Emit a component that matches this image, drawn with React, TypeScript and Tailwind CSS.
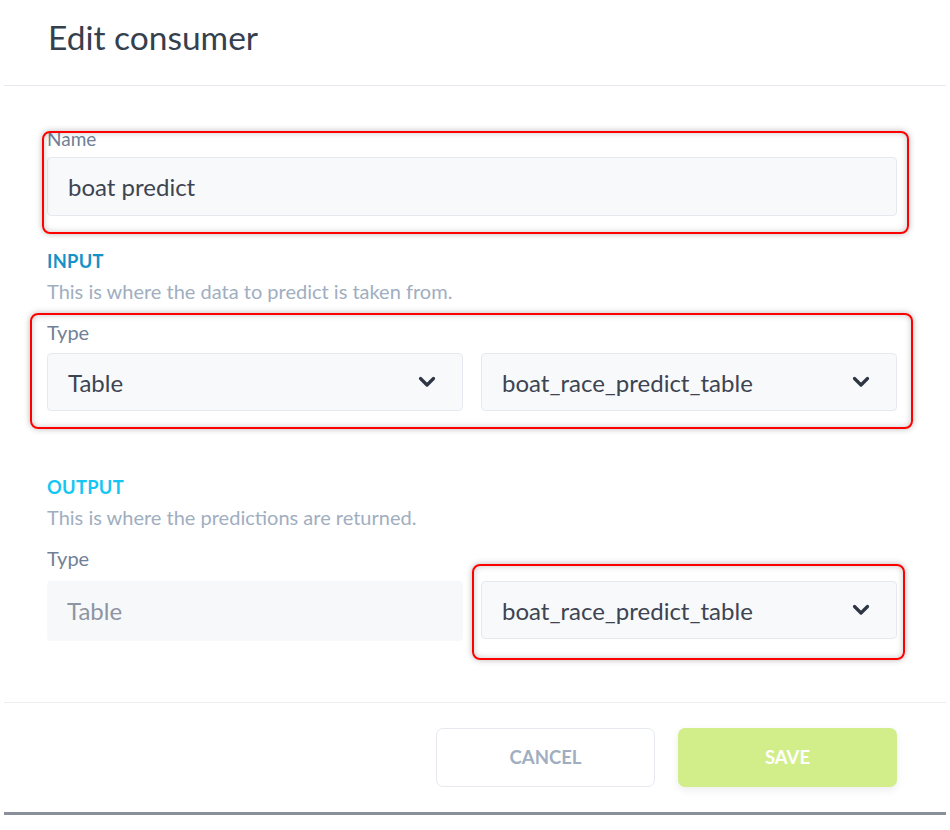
import React from 'react';

const font = "font-['Lato','Noto_Sans',sans-serif]";

const Chevron: React.FC = () => (
    <svg width="18" height="12" viewBox="0 0 18 12" className="shrink-0">
        <polyline points="2.5,2.5 9,9 15.5,2.5" fill="none" stroke="#2d3642" strokeWidth="3.2" strokeLinecap="round" strokeLinejoin="round" />
    </svg>
);

const RedBox: React.FC<{ className: string }> = ({ className }) => (
    <div
        className={`pointer-events-none absolute rounded-[8px] border-2 border-[#ff0000] shadow-[0_0_6px_rgba(0,0,0,0.28),inset_0_0_6px_rgba(0,0,0,0.22)] ${className}`}
    />
);

const Select: React.FC<{ value: string }> = ({ value }) => (
    <div className="flex h-[58px] items-center justify-between rounded-[4px] border border-[#e6e9ef] bg-[#f8f9fb] pl-[20px] pr-[26px] text-[24px] text-[#3d4451]">
        <span className="translate-y-[1px]">{value}</span>
        <Chevron />
    </div>
);

export default function App() {
    return (
        <div className={`min-h-[830px] bg-white px-1 ${font}`}>
            {/* Header */}
            <div className="h-[86px] border-b border-[#e5e8ee] pl-[44px] pt-[17px]">
                <h1 className="text-[33.5px] leading-[40px] text-[#353f4d]">Edit consumer</h1>
            </div>

            {/* Form */}
            <div className="pl-[43px] pr-[49px] pt-[42px]">
                <div className="relative">
                    <label className="block text-[19px] leading-[22px] text-[#718096]">Name</label>
                    <div className="mt-[7px] flex h-[59px] items-center rounded-[4px] border border-[#e6e9ef] bg-[#f8f9fb] pl-[20px] text-[24px] text-[#3d4451]">
                        boat predict
                    </div>
                    <RedBox className="left-[-5px] right-[-12px] top-[3px] bottom-[-18px]" />
                </div>

                <div className="mt-[33px] text-[18.3px] font-bold leading-[24px] tracking-[0.3px] text-[#1592c8]">INPUT</div>
                <div className="mt-[6px] text-[20px] leading-[24px] text-[#a0aec0]">This is where the data to predict is taken from.</div>

                <div className="relative mt-[17px]">
                    <label className="block text-[20px] leading-[24px] text-[#718096]">Type</label>
                    <div className="mt-[9px] grid grid-cols-2 gap-[18px]">
                        <Select value="Table" />
                        <Select value="boat_race_predict_table" />
                    </div>
                    <RedBox className="left-[-17px] right-[-16px] top-[-7px] bottom-[-18px]" />
                </div>

                <div className="mt-[64px] text-[18.3px] font-bold leading-[24px] tracking-[0.3px] text-[#13c6f3]">OUTPUT</div>
                <div className="mt-[6px] text-[20px] leading-[24px] text-[#a0aec0]">This is where the predictions are returned.</div>

                <label className="mt-[17px] block text-[20px] leading-[24px] text-[#718096]">Type</label>
                <div className="mt-[11px] grid grid-cols-2 gap-[18px]">
                    <div className="flex h-[60px] items-center rounded-[4px] bg-[#f7f8fa] pl-[20px] text-[24px] text-[#8d95a3]">Table</div>
                    <div className="relative">
                        <Select value="boat_race_predict_table" />
                        <RedBox className="left-[-9px] right-[-8px] top-[-17px] bottom-[-19px]" />
                    </div>
                </div>
            </div>

            {/* Footer */}
            <div className="mt-[61px] border-t border-[#eceef2]">
                <div className="flex justify-end gap-[23px] pr-[49px] pt-[25px]">
                    <button className="h-[59px] w-[219px] rounded-[7px] border border-[#e6e9ef] bg-white text-[18.5px] font-bold text-[#a0aec0]">
                        CANCEL
                    </button>
                    <button className="h-[59px] w-[219px] rounded-[7px] bg-[#d1ee8a] text-[18.5px] font-bold text-white shadow-[0_3px_8px_rgba(0,0,0,0.08)]">
                        SAVE
                    </button>
                </div>
                <div className="mt-[25px] h-[3px] bg-[#8a9099]" />
            </div>
        </div>
    );
}
